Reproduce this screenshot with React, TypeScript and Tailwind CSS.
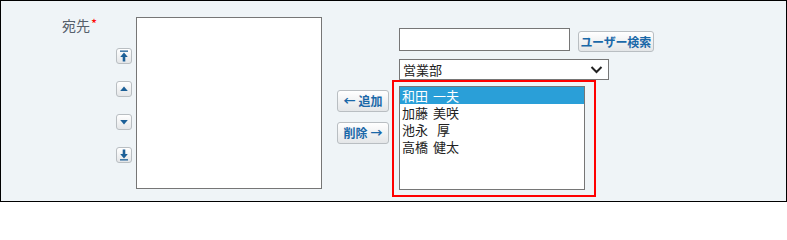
import React from "react";

const font = "font-['Noto_Sans_CJK_JP','Noto_Sans',sans-serif]";

function ArrowIcon({ kind }: { kind: "top" | "up" | "down" | "bottom" }) {
  // small reorder glyphs drawn in dark blue
  const c = "#1b5f97";
  return (
    <svg width="10" height="12" viewBox="0 0 10 12">
      {kind === "top" && (
        <>
          <rect x="1" y="0.5" width="8" height="1.3" fill={c} />
          <path d="M5 2.5 L8.8 7 L6.3 7 L6.3 11.5 L3.7 11.5 L3.7 7 L1.2 7 Z" fill={c} />
        </>
      )}
      {kind === "up" && <path d="M5 3.5 L8.8 8 L1.2 8 Z" fill={c} />}
      {kind === "down" && <path d="M5 8.5 L8.8 4 L1.2 4 Z" fill={c} />}
      {kind === "bottom" && (
        <>
          <path d="M5 9.5 L8.8 5 L6.3 5 L6.3 0.5 L3.7 0.5 L3.7 5 L1.2 5 Z" fill={c} />
          <rect x="1" y="10.2" width="8" height="1.3" fill={c} />
        </>
      )}
    </svg>
  );
}

const btn =
  "flex items-center justify-center rounded-[3px] border border-[#b9bec2] bg-gradient-to-b from-white to-[#e4e6e8] text-[12px] font-bold text-[#1a68a8] leading-none";

const members = [
  { family: "和田", given: "一夫", gap: "ml-[5px]" },
  { family: "加藤", given: "美咲", gap: "ml-[5px]" },
  { family: "池永", given: "厚", gap: "ml-[9px]" },
  { family: "高橋", given: "健太", gap: "ml-[5px]" },
];

export default function App() {
  return (
    <div className={`${font} w-[787px] h-[202px] border border-black bg-[#eff4f7] flex items-start`}>
      {/* label */}
      <div className="w-[96px] mt-[14px] text-right text-[14px] text-[#55606b] leading-[20px]">
        宛先<span className="text-[#ff0000] text-[13px] relative top-[-2px] ml-[1px]">*</span>
      </div>

      {/* reorder buttons */}
      <div className="ml-[19px] mt-[47px] flex flex-col gap-[17px]">
        {(["top", "up", "down", "bottom"] as const).map((k) => (
          <div key={k} className={`${btn} w-[16px] h-[16px] rounded-[2px] border-[#9a9ea2]`}>
            <ArrowIcon kind={k} />
          </div>
        ))}
      </div>

      {/* selected list */}
      <div className="ml-[4px] mt-[16px] w-[186px] h-[172px] border border-[#767676] bg-white" />

      {/* add / remove */}
      <div className="ml-[15px] mt-[89px] flex flex-col gap-[10px]">
        <div className={`${btn} w-[52px] h-[22px] gap-[3px]`}>
          <span>←</span>
          <span>追加</span>
        </div>
        <div className={`${btn} w-[52px] h-[22px] gap-[3px]`}>
          <span>削除</span>
          <span>→</span>
        </div>
      </div>

      {/* candidate side */}
      <div className="ml-[3px] flex flex-col">
        <div className="flex items-start ml-[7px] mt-[27px]">
          <div className="w-[171px] h-[23px] border border-[#767676] bg-white" />
          <div className={`${btn} ml-[8px] mt-[3px] w-[76px] h-[21px] [font-feature-settings:'palt']`}>
            ユーザー検索
          </div>
        </div>
        <div className="ml-[7px] mt-[7px] w-[210px] h-[21px] border border-[#767676] bg-white flex items-center justify-between pl-[3px] pr-[5px] text-[13px] text-[#222]">
          <span>営業部</span>
          <svg width="13" height="9" viewBox="0 0 13 9">
            <path d="M1.5 2 L6.5 7 L11.5 2" stroke="#222" strokeWidth="2" fill="none" />
          </svg>
        </div>
        <div className="w-[204px] border-2 border-[#ff0000] pt-[4px] pl-[5px] pr-[9px] pb-[5px]">
          <div className="w-[186px] h-[104px] border border-[#767676] bg-white text-[13px] leading-[17px] text-[#222]">
            {members.map((m, i) => (
              <div
                key={m.family}
                className={`flex px-[2px] h-[17px] ${i === 0 ? "bg-[#2a9fd8] text-white" : ""}`}
              >
                <span>{m.family}</span>
                <span className={m.gap}>{m.given}</span>
              </div>
            ))}
          </div>
        </div>
      </div>
    </div>
  );
}
